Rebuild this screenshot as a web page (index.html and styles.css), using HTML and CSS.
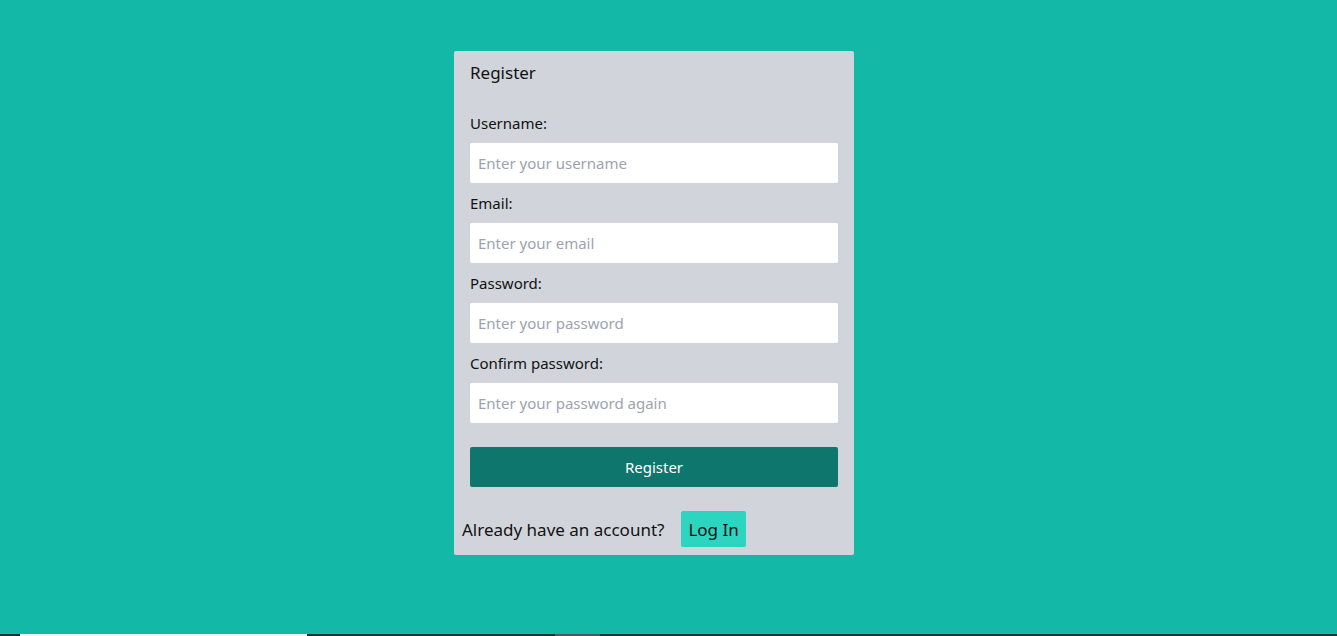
FILE: index.html
```html
<!DOCTYPE html>
<html lang="en">
<head>
<meta charset="utf-8">
<title>Register</title>
<link rel="stylesheet" href="styles.css">
</head>
<body>
<main class="page">
  <form class="card">
    <h1 class="title">Register</h1>
    <div class="field">
      <label class="label" for="u">Username:</label>
      <input class="input" id="u" type="text" placeholder="Enter your username">
    </div>
    <div class="field">
      <label class="label" for="e">Email:</label>
      <input class="input" id="e" type="email" placeholder="Enter your email">
    </div>
    <div class="field">
      <label class="label" for="p">Password:</label>
      <input class="input" id="p" type="password" placeholder="Enter your password">
    </div>
    <div class="field field-last">
      <label class="label" for="c">Confirm password:</label>
      <input class="input" id="c" type="password" placeholder="Enter your password again">
    </div>
    <button class="submit" type="button">Register</button>
    <div class="footer">
      <span class="footer-text">Already have an account?</span>
      <button class="login" type="button">Log In</button>
    </div>
  </form>
</main>
<div class="taskbar">
  <span class="tb-gap"></span>
  <span class="tb-white"></span>
  <span class="tb-dark"></span>
  <span class="tb-grey"></span>
  <span class="tb-rest"></span>
</div>
</body>
</html>
```
FILE: styles.css
```css
* { box-sizing: border-box; }
html, body { height: 100%; }
body {
  margin: 0;
  background: #14b8a6;
  font-family: "Noto Sans", "Open Sans", sans-serif;
  color: #111;
  display: flex;
  flex-direction: column;
}
.page {
  flex: 1;
  display: flex;
  justify-content: center;
  align-items: flex-start;
  padding: 51px 29px 0 0;
}
.card {
  width: 400px;
  background: #d1d5db;
  border-radius: 2px;
  padding: 8px 16px 8px 16px;
  display: flex;
  flex-direction: column;
}
.title {
  margin: 0 0 24px 0;
  font-size: 17px;
  font-weight: 400;
  line-height: 28px;
}
.field {
  display: flex;
  flex-direction: column;
  margin-bottom: 8px;
}
.field-last { margin-bottom: 0; }
.label {
  font-size: 15px;
  line-height: 24px;
  margin-bottom: 8px;
}
.input {
  height: 40px;
  border: none;
  border-radius: 2px;
  background: #fff;
  padding: 0 8px;
  font-family: inherit;
  font-size: 15px;
  color: #111;
}
.input::placeholder { color: #9ca3af; }
.submit {
  margin-top: 24px;
  height: 40px;
  border: none;
  border-radius: 2px;
  background: #0f766e;
  color: #fff;
  font-family: inherit;
  font-size: 15px;
}
.footer {
  margin: 24px 0 0 -8px;
  display: flex;
  align-items: center;
  gap: 17px;
  height: 36px;
}
.footer-text {
  font-size: 17px;
}
.login {
  height: 36px;
  padding: 0 7px;
  border: none;
  border-radius: 2px;
  background: #2dd4bf;
  color: #111;
  font-family: inherit;
  font-size: 17px;
}
.taskbar {
  height: 2px;
  display: flex;
  background: #0b3b37;
}
.tb-gap { width: 20px; }
.tb-white { width: 287px; background: #f2f5f4; }
.tb-dark { width: 248px; }
.tb-grey { width: 45px; background: #4a5a58; }
.tb-rest { flex: 1; }
```
